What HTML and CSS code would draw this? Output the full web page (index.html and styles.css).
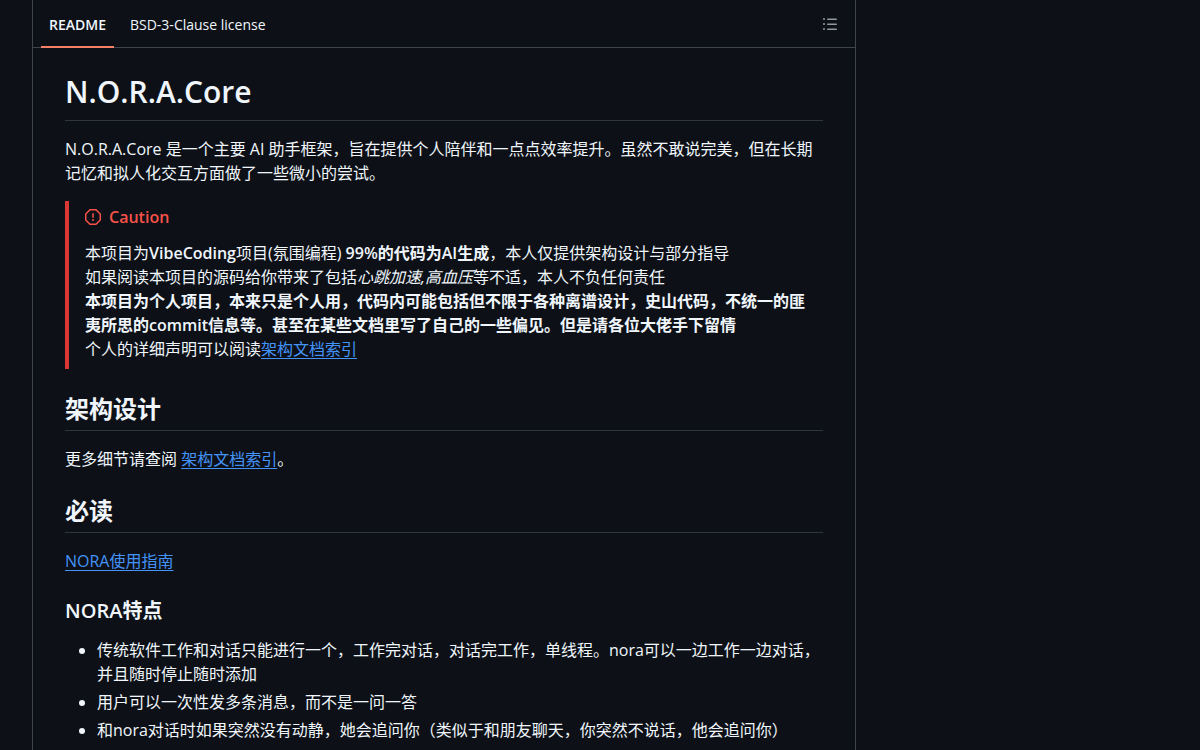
FILE: index.html
```html
<!DOCTYPE html>
<html lang="zh-CN">
<head>
<meta charset="utf-8">
<meta name="viewport" content="width=device-width, initial-scale=1">
<title>N.O.R.A.Core</title>
<link rel="stylesheet" href="styles.css">
</head>
<body>
<div class="layout">
  <main class="panel">
    <header class="panel-header">
      <nav class="tabs" aria-label="Repository files">
        <a class="tab tab-active" href="#readme" aria-current="page">README</a>
        <a class="tab" href="#license">BSD-3-Clause license</a>
      </nav>
      <button class="outline-button" type="button" aria-label="Outline">
        <svg width="16" height="16" viewBox="0 0 16 16" fill="currentColor" aria-hidden="true"><path d="M5.75 2.5h8.5a.75.75 0 0 1 0 1.500h-8.500a.75.75 0 0 1 0-1.500Zm0 5h8.500a.75.75 0 0 1 0 1.500h-8.500a.75.75 0 0 1 0-1.500Zm0 5h8.500a.75.75 0 0 1 0 1.500h-8.500a.75.75 0 0 1 0-1.500ZM2 14a1 1 0 1 1 0-2 1 1 0 0 1 0 2Zm1-6a1 1 0 1 1-2 0 1 1 0 0 1 2 0ZM2 4a1 1 0 1 1 0-2 1 1 0 0 1 0 2Z"/></svg>
      </button>
    </header>
    <article class="markdown" id="readme">
      <h1>N.O.R.A.Core</h1>
      <p>N.O.R.A.Core 是一个主要 AI 助手框架，旨在提供个人陪伴和一点点效率提升。虽然不敢说完美，但在长期记忆和拟人化交互方面做了一些微小的尝试。</p>
      <div class="alert">
        <p class="alert-title">
          <svg width="16" height="16" viewBox="0 0 16 16" fill="currentColor" aria-hidden="true"><path d="M4.470.22A.749.749 0 0 1 5 0h6c.199 0 .389.079.530.220l4.250 4.250c.141.140.220.331.220.530v6a.749.749 0 0 1-.220.530l-4.250 4.250A.749.749 0 0 1 11 16H5a.749.749 0 0 1-.530-.220L.220 11.530A.749.749 0 0 1 0 11V5c0-.199.079-.389.220-.530Zm.840 1.280L1.500 5.310v5.380l3.810 3.810h5.380l3.810-3.810V5.310L10.690 1.500ZM8 4a.75.75 0 0 1 .75.75v3.500a.75.75 0 0 1-1.500 0v-3.500A.75.75 0 0 1 8 4Zm0 8a1 1 0 1 1 0-2 1 1 0 0 1 0 2Z"/></svg>
          Caution
        </p>
        <p>本项目为<strong>VibeCoding</strong>项目(氛围编程) <strong>99%的代码为AI生成</strong>，本人仅提供架构设计与部分指导<br>
        如果阅读本项目的源码给你带来了包括<em>心跳加速,高血压</em>等不适，本人不负任何责任<br>
        <strong>本项目为个人项目，本来只是个人用，代码内可能包括但不限于各种离谱设计，史山代码，不统一的匪夷所思的commit信息等。甚至在某些文档里写了自己的一些偏见。但是请各位大佬手下留情</strong><br>
        个人的详细声明可以阅读<a href="#docs">架构文档索引</a></p>
      </div>
      <h2>架构设计</h2>
      <p>更多细节请查阅 <a href="#docs">架构文档索引</a>。</p>
      <h2>必读</h2>
      <p><a href="#guide">NORA使用指南</a></p>
      <h3>NORA特点</h3>
      <ul>
        <li>传统软件工作和对话只能进行一个，工作完对话，对话完工作，单线程。nora可以一边工作一边对话，并且随时停止随时添加</li>
        <li>用户可以一次性发多条消息，而不是一问一答</li>
        <li>和nora对话时如果突然没有动静，她会追问你（类似于和朋友聊天，你突然不说话，他会追问你）</li>
      </ul>
    </article>
  </main>
</div>
</body>
</html>
```
FILE: styles.css
```css
* { box-sizing: border-box; }

body {
  margin: 0;
  background: #0d1117;
  color: #f0f6fc;
  font: 16px/24px "Open Sans", "Noto Sans CJK SC", sans-serif;
}

.layout {
  display: grid;
  grid-template-columns: minmax(0, 1fr) 296px;
  gap: 16px;
  min-height: 100vh;
  padding: 0 32px;
}

.panel {
  border: 1px solid #3d444d;
  border-width: 0 1px;
}

.panel-header {
  display: flex;
  justify-content: space-between;
  align-items: center;
  height: 48px;
  padding: 0 9px 0 8px;
  border-bottom: 1px solid #3d444d;
}

.tabs {
  display: flex;
  align-self: stretch;
  gap: 8px;
}

.tab {
  display: flex;
  align-items: center;
  height: 48px;
  padding: 4px 8px 0;
  border-bottom: 2px solid transparent;
  color: #f0f6fc;
  font-size: 14px;
  text-decoration: none;
}

.tab-active {
  border-bottom-color: #f78166;
  font-weight: 600;
}

.outline-button {
  display: flex;
  padding: 8px;
  border: 0;
  border-radius: 6px;
  background: transparent;
  color: #9198a1;
  cursor: pointer;
}

.markdown {
  padding: 24px 32px 0;
}

.markdown h1,
.markdown h2,
.markdown h3 {
  margin: 24px 0 16px;
  font-weight: 600;
}

.markdown h1 {
  margin-top: 0;
  padding-bottom: 8px;
  border-bottom: 1px solid #2f353d;
  font-size: 30px;
  line-height: 40px;
}

.markdown h2 {
  padding-bottom: 5px;
  border-bottom: 1px solid #2f353d;
  font-size: 24px;
  line-height: 32px;
}

.markdown h3 {
  margin-bottom: 14px;
  font-size: 20px;
  line-height: 27px;
}

.markdown p { margin: 0 0 16px; }

.markdown strong { font-weight: 600; }

.markdown a {
  color: #4493f8;
  text-decoration: underline;
  text-decoration-thickness: 1px;
  text-underline-offset: 3px;
}

.markdown ul {
  margin: 0;
  padding-left: 32px;
}

.markdown li + li { margin-top: 4px; }

.alert {
  margin-bottom: 16px;
  padding: 8px 16px;
  border-left: 4px solid #da3633;
}

.alert p:last-child { margin-bottom: 0; }

.alert .alert-title {
  display: flex;
  align-items: center;
  gap: 8px;
  color: #f85149;
  font-weight: 600;
  line-height: 16px;
}
```
